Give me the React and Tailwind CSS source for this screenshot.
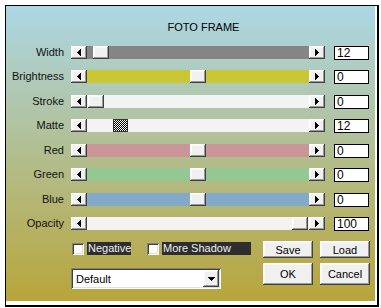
import React from "react";

const RAISED =
  "bg-[#f0f0f0] shadow-[inset_-1px_-1px_#404040,inset_1px_1px_#ffffff,inset_-2px_-2px_#9a9a9a,inset_2px_2px_#f8f8f8]";
const SUNKEN =
  "bg-white shadow-[inset_1px_1px_#808080,inset_-1px_-1px_#ffffff,inset_2px_2px_#404040,inset_-2px_-2px_#e0e0e0]";

function ArrowLeft() {
  return (
    <svg width="4" height="7" shapeRendering="crispEdges">
      <rect x="0" y="3" width="1" height="1" fill="#000" />
      <rect x="1" y="2" width="1" height="3" fill="#000" />
      <rect x="2" y="1" width="1" height="5" fill="#000" />
      <rect x="3" y="0" width="1" height="7" fill="#000" />
    </svg>
  );
}
function ArrowRight() {
  return (
    <svg width="4" height="7" shapeRendering="crispEdges">
      <rect x="3" y="3" width="1" height="1" fill="#000" />
      <rect x="2" y="2" width="1" height="3" fill="#000" />
      <rect x="1" y="1" width="1" height="5" fill="#000" />
      <rect x="0" y="0" width="1" height="7" fill="#000" />
    </svg>
  );
}
function ArrowDown() {
  return (
    <svg width="7" height="4" shapeRendering="crispEdges">
      <rect x="0" y="0" width="7" height="1" fill="#000" />
      <rect x="1" y="1" width="5" height="1" fill="#000" />
      <rect x="2" y="2" width="3" height="1" fill="#000" />
      <rect x="3" y="3" width="1" height="1" fill="#000" />
    </svg>
  );
}

const rows = [
  { label: "Width", track: "bg-[#858585]", pos: 6, value: "12" },
  { label: "Brightness", track: "bg-[#c9c834]", pos: 103, value: "0" },
  { label: "Stroke", track: "bg-[#f3f3f3]", pos: 1, value: "0" },
  { label: "Matte", track: "bg-[#f3f3f3]", pos: 26, value: "12", checker: true },
  { label: "Red", track: "bg-[#c99597]", pos: 103, value: "0" },
  { label: "Green", track: "bg-[#93c893]", pos: 103, value: "0" },
  { label: "Blue", track: "bg-[#82a9c7]", pos: 103, value: "0" },
  { label: "Opacity", track: "bg-[#f3f3f3]", pos: 205, value: "100" },
];

function Row({ label, track, pos, value, checker }) {
  return (
    <div className="flex items-start h-[24.43px]">
      <div className="w-[58px] text-right text-[11px] leading-[13px] text-[#111]">{label}</div>
      <div className="ml-[7px] flex h-[13px] w-[254px]">
        <div className={`w-[16px] h-full flex items-center justify-center ${RAISED}`}>
          <ArrowLeft />
        </div>
        <div className={`flex-1 flex h-full ${track}`}>
          <div className="shrink-0" style={{ width: pos }} />
          {checker ? (
            <div className="w-[15px] h-full bg-[repeating-conic-gradient(#000_0%_25%,#fff_0%_50%)] bg-[length:2px_2px] border border-[#333]" />
          ) : (
            <div className={`w-[16px] h-full ${RAISED}`} />
          )}
        </div>
        <div className={`w-[16px] h-full flex items-center justify-center ${RAISED}`}>
          <ArrowRight />
        </div>
      </div>
      <div className="ml-[9px] w-[35px] h-[14px] bg-white border border-black text-[12px] leading-[12px] pl-[2px] text-black">
        {value}
      </div>
    </div>
  );
}

function Check({ label, bgWidth }) {
  return (
    <div className="flex items-center">
      <div className={`w-[12px] h-[12px] ${SUNKEN}`} />
      <div
        className="ml-[3px] h-[13px] bg-[#2e2e2e] text-[#f0f0f0] text-[11px] leading-[13px] pl-[1px]"
        style={{ width: bgWidth }}
      >
        {label}
      </div>
    </div>
  );
}

function Button({ children, h }) {
  return (
    <div
      className={`w-[50px] flex items-center justify-center text-[11px] text-black ${RAISED}`}
      style={{ height: h }}
    >
      {children}
    </div>
  );
}

export default function App() {
  return (
    <div className="w-[381px] h-[308px] bg-white pt-[5px] pl-[5px] font-['Liberation_Sans',Arial,sans-serif]">
      <div className="w-[374px] h-[302px] border-t border-l border-r-2 border-b-2 border-black">
        <div className="h-full border-r-2 border-b-4 border-white bg-[linear-gradient(180deg,#acd7e5_0%,#b2be90_50%,#b8a53a_100%)] flex flex-col">
          <div className="mt-[15px] h-[13px] pl-[26px] text-center text-[11px] leading-[13px] text-black">
            FOTO FRAME
          </div>
          <div className="mt-[12px] flex flex-col">
            {rows.map((r) => (
              <Row key={r.label} {...r} />
            ))}
          </div>
          <div className="flex">
            <div className="ml-[65px] w-[192px] flex flex-col">
              <div className="mt-[1px] ml-[1px] flex items-center gap-[16px]">
                <Check label="Negative" bgWidth={44} />
                <Check label="More Shadow" bgWidth={89} />
              </div>
              <div className={`mt-[13px] w-[150px] h-[21px] flex items-center p-[2px] ${SUNKEN}`}>
                <div className="flex-1 text-[11px] pl-[3px] text-black">Default</div>
                <div className={`w-[16px] h-full flex items-center justify-center ${RAISED}`}>
                  <ArrowDown />
                </div>
              </div>
            </div>
            <div className="flex flex-col gap-[5px] mt-[0px]">
              <div className="flex gap-[7px]">
                <Button h={17}>Save</Button>
                <Button h={17}>Load</Button>
              </div>
              <div className="flex gap-[7px]">
                <Button h={22}>OK</Button>
                <Button h={22}>Cancel</Button>
              </div>
            </div>
          </div>
        </div>
      </div>
    </div>
  );
}
